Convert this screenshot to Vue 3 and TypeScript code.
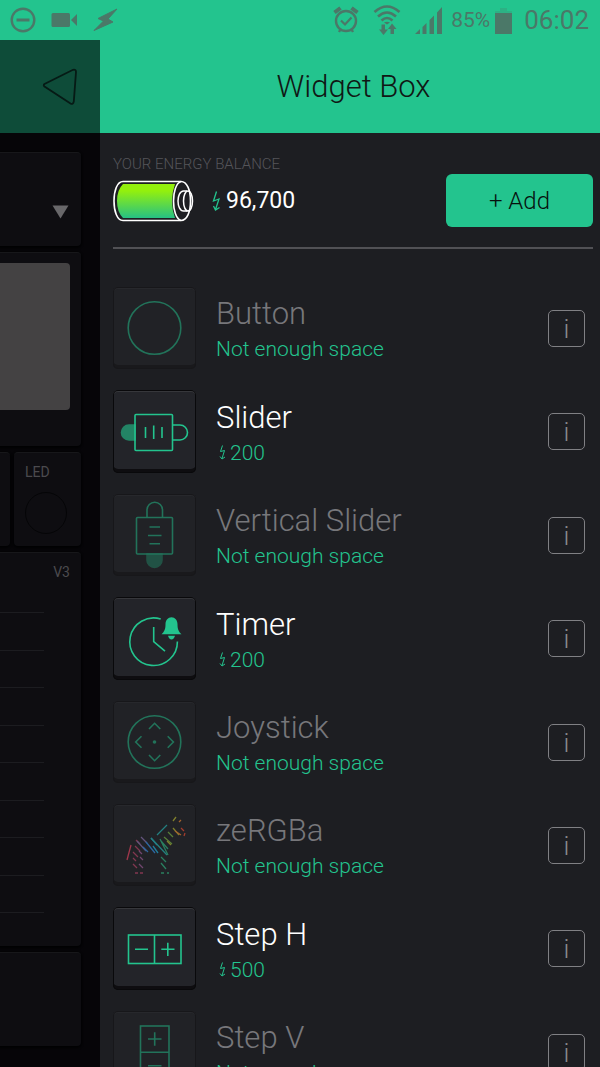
<script setup lang="ts">
type IconName = 'button' | 'slider' | 'vslider' | 'timer' | 'joystick' | 'zergba' | 'steph' | 'stepv'

interface Widget {
  name: string
  icon: IconName
  price?: number
}

const widgets: Widget[] = [
  { name: 'Button', icon: 'button' },
  { name: 'Slider', icon: 'slider', price: 200 },
  { name: 'Vertical Slider', icon: 'vslider' },
  { name: 'Timer', icon: 'timer', price: 200 },
  { name: 'Joystick', icon: 'joystick' },
  { name: 'zeRGBa', icon: 'zergba' },
  { name: 'Step H', icon: 'steph', price: 500 },
  { name: 'Step V', icon: 'stepv' },
]

const balance = (96700).toLocaleString('en-US')

// Zebra stripes: colour and path of each group
const stripes: [string, string][] = [
  ['#b03a50', 'M18 41L14 56'],
  ['#8d3a55', 'M23 36l4 4M22 42l5 5M20 48l5 5M20 54l3 3M20 60l4 4M22 69h3M27 69h3'],
  ['#7a4a78', 'M27 53l3 3M26 60l4 4M26 47l3 3'],
  ['#6b5a86', 'M28 33l6 6M24 37l9 10'],
  ['#2f6fae', 'M33 38l9 11M30 43l5 5'],
  ['#1f86a8', 'M38 34l6 7M40 42l5 7'],
  ['#258a8a', 'M38 34l16 17M44 31l10-10'],
  ['#2b8a66', 'M47 35l8 16M48 37l7 8M48 53l5 5M48 59l5 6M48 69h3M54 69h2'],
  ['#5f8a3a', 'M51 33l8 7M55 28l5 5'],
  ['#8a8a2e', 'M54 37l4 4M60 24l6 7M60 17l3-4'],
  ['#b06a2e', 'M62 27l6 4M66 18l2-2'],
  ['#b0402e', 'M68 24l3 3M71 32l1-3'],
]
</script>

<template>
  <div class="screen">
    <header class="status">
      <div class="status-group left">
        <svg width="26" height="26" viewBox="0 0 26 26" aria-hidden="true">
          <circle cx="13" cy="13" r="11.3" fill="none" stroke="currentColor" stroke-width="2.4" />
          <path d="M6.500 13h13" stroke="currentColor" stroke-width="3" />
        </svg>
        <svg width="27" height="16" viewBox="0 0 27 16" aria-hidden="true">
          <rect x="0.500" y="1" width="18.500" height="14" rx="1.500" fill="currentColor" />
          <path d="M20 8l6-6v12z" fill="currentColor" />
        </svg>
        <svg width="26" height="24" viewBox="0 0 26 24" aria-hidden="true">
          <path d="M24 1L5 10.500l5.500 2.500L1 22.500 20 14l-5-3z" fill="currentColor" stroke="currentColor" />
        </svg>
      </div>
      <div class="status-group right">
        <svg width="26" height="28" viewBox="0 0 26 28" fill="none" stroke="currentColor" aria-hidden="true">
          <circle cx="13" cy="15" r="10" stroke-width="2.400" />
          <path d="M8 14.500l4 4 6.500-7" stroke-width="2.200" />
          <path d="M1.500 6.500l6-4.500M24.500 6.500l-6-4.500" stroke-width="4" />
          <path d="M7.500 23.500L6 26M18.500 23.500L20 26" stroke-width="2.400" />
        </svg>
        <svg class="wifi" width="28" height="30" viewBox="0 0 28 30" fill="none" stroke="currentColor" aria-hidden="true">
          <path d="M1.500 7q12.500-11 25 0M5 11.500q9-8 18 0M8.500 15.500q5.500-5 11 0" stroke-width="2.600" />
          <path d="M11 17.500q3-1.500 6 0l-3 2z" fill="currentColor" stroke="none" />
          <path d="M8.500 19.500h3.500v5h3L10.500 30 6 24.500h2.500zM17.500 29v-5h-2.500L19 18.500l4.500 5.500H21v5z" fill="currentColor" stroke="none" />
        </svg>
        <svg class="signal" width="28" height="27" viewBox="0 0 28 27" fill="currentColor" aria-hidden="true">
          <path d="M0 27l5-5v5zM7.500 20l4-4v11h-4zM14.500 13l4.500-4.500V27h-4.500zM22 5.500L27 0v27h-5z" />
        </svg>
        <span class="percent">85%</span>
        <svg class="cell" width="17" height="27" viewBox="0 0 17 27" aria-hidden="true">
          <path d="M5 1h7v3h5v2H0V4h5z" fill="currentColor" opacity="0.250" />
          <path d="M0 6h17v21H0z" fill="currentColor" />
        </svg>
        <time class="clock">06:02</time>
      </div>
    </header>

    <main class="body">
      <section class="project" aria-label="Project">
        <div class="project-bar">
          <button class="back" type="button" aria-label="Back">
            <svg width="36" height="38" viewBox="0 0 36 38" aria-hidden="true">
              <path d="M2.500 16L31 1.800Q34 1 34 4L31.800 33.500Q31 37 28.500 35.500L2.500 18.500Q1 17 2.500 16z" fill="none" stroke="#061a15" stroke-width="1.800" />
            </svg>
          </button>
        </div>
        <div class="canvas">
          <div class="card menu-card">
            <svg width="17" height="14" viewBox="0 0 17 14" aria-hidden="true"><path d="M0.500 0.500h16L8.500 13.500z" fill="#68676a" /></svg>
          </div>
          <div class="card video-card"><div class="preview"></div></div>
          <div class="split">
            <div class="card stub"></div>
            <div class="card led-card">
              <span>LED</span>
              <div class="led"></div>
            </div>
          </div>
          <div class="card chart-card">
            <span>V3</span>
            <div class="lines"><i v-for="n in 9" :key="n"></i></div>
          </div>
          <div class="card"></div>
        </div>
      </section>

      <section class="box">
        <h1>Widget Box</h1>
        <div class="content">
          <div class="energy">
            <div>
              <p class="caption">YOUR ENERGY BALANCE</p>
              <div class="balance">
                <svg width="81" height="42" viewBox="0 0 81 42" fill="none" aria-hidden="true">
                  <defs>
                    <linearGradient id="charge" x1="0" y1="0" x2="0" y2="1">
                      <stop offset="0.200" stop-color="#93f00d" />
                      <stop offset="1" stop-color="#26c184" />
                    </linearGradient>
                  </defs>
                  <path d="M10 4H62Q59 12 59 21T62 38H10Q4 32 4 21T10 4z" fill="url(#charge)" />
                  <path d="M10 1.500H68C74 1.500 77.500 10 77.500 21S74 40.500 68 40.500H10C4 40.500 1 31 1 21S4 1.500 10 1.500z" stroke="#fff" stroke-width="1.600" />
                  <path d="M68 1.500C63 3 60.500 12 60.500 21S63 39 68 40.500" stroke="#fff" stroke-width="1.600" />
                  <path d="M74 11H70.500C67 11 65 16 65 21S67 31 70.500 31H74" stroke="#fff" stroke-width="1.500" />
                  <ellipse cx="75" cy="21" rx="4.500" ry="10" stroke="#fff" stroke-width="1.500" />
                </svg>
                <svg class="bolt" width="8" height="20" viewBox="0 0 8 20" fill="none" stroke="#23c48e" aria-hidden="true">
                  <path d="M4.500 0.500L1.500 10 7 8 3.500 18.500M1.500 15l2 4 4-2.500" stroke-width="1.300" />
                </svg>
                <strong>{{ balance }}</strong>
              </div>
            </div>
            <button class="add" type="button">+ Add</button>
          </div>

          <ul class="widgets">
            <li v-for="w in widgets" :key="w.name" :class="{ available: w.price }">
              <button class="tile" type="button" :aria-label="'Add ' + w.name" :disabled="!w.price">
                <svg :class="w.icon" width="83" height="82" viewBox="0 0 83 82" fill="none" stroke="#23c48e" stroke-width="1.600" aria-hidden="true">
                  <circle v-if="w.icon === 'button'" cx="41.500" cy="41" r="26.300" />
                  <template v-else-if="w.icon === 'slider'">
                    <path d="M22 34h-6a7.500 7.500 0 0 0 0 15h6z" fill="#23c48e" opacity="0.600" />
                    <rect x="22" y="23.500" width="37.500" height="36" rx="1" />
                    <path d="M32.500 36v11M40.700 34.500v13.500M49 36v11M59.500 34h7.500a7.500 7.500 0 0 1 0 15h-7.500" />
                  </template>
                  <template v-else-if="w.icon === 'vslider'">
                    <path d="M34 60v6a7.500 7.500 0 0 0 15 0v-6z" fill="#23c48e" opacity="0.600" />
                    <rect x="23.500" y="23.500" width="36" height="36.500" rx="1" />
                    <path d="M36.500 33h10.500M35 41.500h13.500M36.500 49.700h10.500M34 23.500V16a7.500 7.500 0 0 1 15.500 0v7.500" />
                  </template>
                  <template v-else-if="w.icon === 'timer'">
                    <path d="M47.700 21A23.800 23.800 0 1 0 64.400 43.500" />
                    <path d="M40.700 29v14.700l11.300 9.500" />
                    <path d="M48.500 36.200c3-3 4-5 4-10 0-4 2.500-7 6-7s6 3 6 7c0 5 1 7 4 10zM55 37.800h7q-1 3.700-3.500 3.700T55 37.800z" fill="#23c48e" stroke="none" />
                  </template>
                  <template v-else-if="w.icon === 'joystick'">
                    <circle cx="41.500" cy="41" r="26.300" />
                    <circle cx="41.500" cy="41" r="1.800" fill="#23c48e" stroke="none" />
                    <path d="M36 28l5.600-5.700L47.300 28M36 54l5.600 5.700L47.300 54M28.500 35.300L22.700 41l5.800 5.700M54.700 35.300l5.700 5.700-5.700 5.700" />
                  </template>
                  <template v-else-if="w.icon === 'zergba'">
                    <path v-for="[color, d] in stripes" :key="color" :d="d" :stroke="color" stroke-width="1.300" />
                  </template>
                  <template v-else-if="w.icon === 'steph'">
                    <rect x="15.500" y="27" width="52.500" height="28.500" />
                    <path d="M41.500 27v28.500M22 41.300h13M48.300 41.300h13.200M54.800 34.700v13.200" />
                  </template>
                  <template v-else>
                    <rect x="27.500" y="15" width="28.500" height="52.500" />
                    <path d="M27.500 41.300H56M35 28h13.500M41.700 21.300v13.400M35 54.700h13.500" />
                  </template>
                </svg>
              </button>
              <div class="text">
                <h2>{{ w.name }}</h2>
                <p v-if="w.price" class="price">
                  <svg width="7" height="15" viewBox="0 0 7 15" fill="none" stroke="#23c48e" aria-hidden="true">
                    <path d="M3.500 0.500L1.500 6.500 5.500 5.500 3 13.500M1 11.500l2 2.500 3-2" stroke-width="1" />
                  </svg>
                  {{ w.price }}
                </p>
                <p v-else>Not enough space</p>
              </div>
              <button class="info" type="button" :aria-label="'About ' + w.name">i</button>
            </li>
          </ul>
        </div>
      </section>
    </main>
  </div>
</template>

<style>
body {
  margin: 0;
  background: #1d1e22;
}
</style>

<style scoped>
.screen {
  display: flex;
  flex-direction: column;
  height: 100vh;
  overflow: hidden;
  font-family: Roboto, "Liberation Sans", sans-serif;
  font-weight: 300;
  color: #fff;
}
h1, h2, p, ul {
  margin: 0;
  padding: 0;
  font-weight: 300;
}
button {
  padding: 0;
  border: 0;
  background: none;
  font: inherit;
}
svg {
  display: block;
  flex: none;
}

.status {
  flex: none;
  display: flex;
  justify-content: space-between;
  align-items: center;
  height: 40px;
  padding: 0 11px 0 10px;
  background: #23c48e;
  color: #4b7868;
  font-weight: 400;
}
.status-group {
  display: flex;
  align-items: center;
}
.left {
  gap: 15px;
}
.wifi {
  margin-left: 14px;
}
.signal {
  margin-left: 14px;
}
.percent {
  margin-left: 8px;
  font-size: 21px;
}
.cell {
  margin-left: 5px;
}
.clock {
  margin-left: 12px;
  font-size: 26px;
}

.body {
  flex: 1;
  min-height: 0;
  display: grid;
  grid-template-columns: 100px 1fr;
}
.project {
  overflow: hidden;
  background: #060508;
}
.project-bar {
  display: flex;
  justify-content: flex-end;
  align-items: center;
  height: 93px;
  padding-right: 22px;
  background: #0e4c39;
}
.canvas {
  display: flex;
  flex-direction: column;
  gap: 6px;
  padding: 19px 19px 0 0;
}
.card {
  box-sizing: border-box;
  min-height: 94px;
  border-top: 1px solid #17171a;
  border-radius: 0 4px 4px 0;
  background: #0e0d11;
  box-shadow: 0 1px 2px 1px #020203;
  font-size: 14px;
  font-weight: 400;
  line-height: 16px;
  color: #4b4a4e;
}
.menu-card {
  display: flex;
  align-items: center;
  justify-content: flex-end;
  padding: 24px 12px 0 0;
}
.video-card {
  height: 194px;
  padding: 10px 11px 0 0;
}
.preview {
  height: 147px;
  border-radius: 0 4px 4px 0;
  background: #444243;
}
.split {
  display: flex;
  gap: 4px;
}
.stub {
  width: 10px;
}
.led-card {
  flex: 1;
  padding: 11px 11px 0;
  border-radius: 4px;
}
.led {
  box-sizing: border-box;
  width: 42px;
  height: 42px;
  margin-top: 12px;
  border: 1px solid #050507;
  border-radius: 50%;
}
.chart-card {
  height: 394px;
  padding: 11px 11px 0 0;
  text-align: right;
}
.lines {
  display: flex;
  flex-direction: column;
  justify-content: space-between;
  height: 301px;
  margin: 32px 26px 0 0;
}
.lines i {
  height: 1px;
  background: #1c1c20;
}

.box {
  min-width: 0;
  overflow: hidden;
  background: #1d1e22;
}
h1 {
  height: 93px;
  padding-left: 7px;
  background: #23c48e;
  color: #101815;
  font-size: 31px;
  line-height: 93px;
  text-align: center;
}
.content {
  padding: 0 7px 0 13px;
}
.energy {
  display: flex;
  justify-content: space-between;
  align-items: flex-end;
  padding: 23px 0 20px;
  border-bottom: 2px solid #515155;
}
.caption {
  font-size: 15px;
  line-height: 16px;
  color: #55555a;
}
.balance {
  display: flex;
  align-items: center;
  margin: 8px 0 5px;
}
.bolt {
  margin: 0 6px 0 18px;
}
.balance strong {
  font-size: 23px;
  font-weight: 400;
  line-height: 28px;
}
.add {
  width: 147px;
  height: 53px;
  border-radius: 6px;
  background: #23c48e;
  color: #07120e;
  font-size: 24px;
}

.widgets {
  display: flex;
  flex-direction: column;
  gap: 21px;
  padding-top: 38px;
  list-style: none;
}
li {
  display: flex;
  align-items: center;
}
.tile {
  box-sizing: border-box;
  display: grid;
  place-items: center;
  width: 83px;
  height: 82px;
  border-radius: 5px;
  background: #212226;
  box-shadow: inset 0 0 0 1px #17171a, inset 0 2px 0 #27282c, inset 0 -4px 0 #19191c;
}
.tile svg {
  opacity: 0.5;
}
.tile .zergba {
  opacity: 0.9;
}
.available .tile {
  height: 83px;
  background: #232429;
  box-shadow: inset 0 0 0 1px #09090b, inset 0 2px 0 #36373b, inset 0 -4px 0 #0e0d10;
}
.available .tile svg {
  opacity: 1;
}
.text {
  flex: 1;
  padding: 4px 0 0 20px;
}
h2 {
  font-size: 31px;
  line-height: 38px;
  color: #77777b;
}
.available h2 {
  color: #fff;
}
.text p {
  display: flex;
  align-items: center;
  font-size: 21px;
  line-height: 32px;
  color: #23c48e;
}
.price svg {
  margin: 0 4px 0 3px;
}
.info {
  box-sizing: border-box;
  width: 37px;
  height: 37px;
  margin-right: 8px;
  border: 1px solid #808084;
  border-radius: 5px;
  color: #8a8a8e;
  font-size: 26px;
  line-height: 37px;
  text-align: center;
}
</style>
